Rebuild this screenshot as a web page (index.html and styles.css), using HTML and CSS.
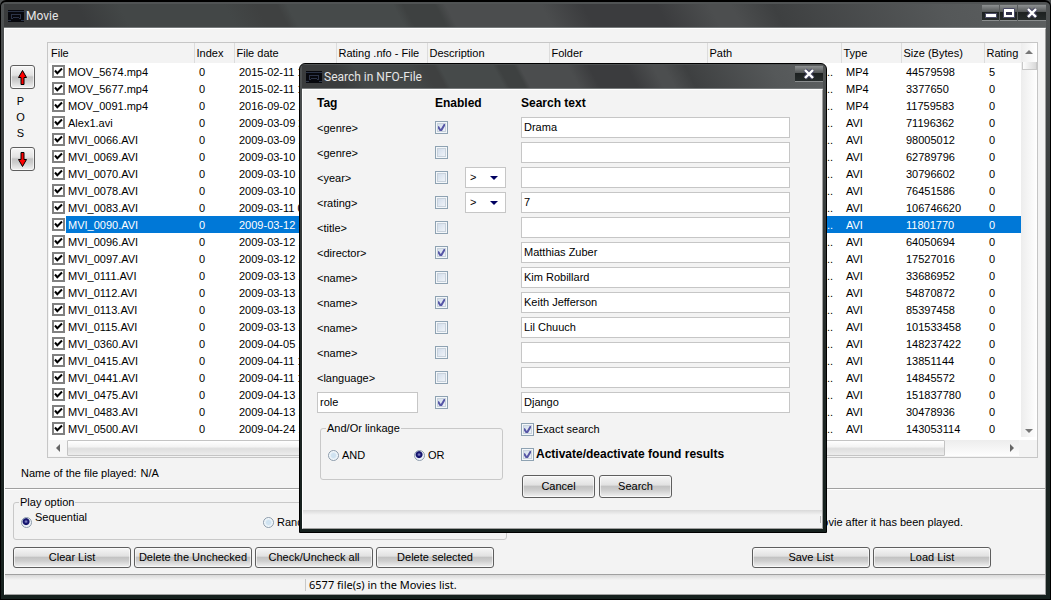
FILE: index.html
```html
<!DOCTYPE html>
<html lang="en">
<head>
<meta charset="utf-8">
<title>Movie</title>
<link rel="stylesheet" href="styles.css">
</head>
<body>
<div class="window main-window">
  <header class="titlebar">
    <svg class="app-icon" width="16" height="12" viewBox="0 0 16 12"><rect width="16" height="12" fill="#07080d"/><path d="M0 1.500h16M0 10.500h3M13 10.500h3" stroke="#2a3346"/><path d="M3 4.500h10M3.500 4v4M12.500 4v4M3 8.500h2M11 8.500h2M5 7.500h6" stroke="#2c3448" fill="none"/></svg>
    <h1 class="title">Movie</h1>
    <div class="caption-buttons">
      <button class="cap cap-narrow" aria-label="Minimize"><svg width="12" height="12" viewBox="0 0 12 12"><path d="M.5 6.500h11v4H.5z" fill="#fff" stroke="#4a4a66"/></svg></button>
      <button class="cap cap-narrow" aria-label="Maximize"><svg width="12" height="12" viewBox="0 0 12 12"><path d="M.5 1.500h11v9H.5z" fill="#fff" stroke="#4a4a66"/><path d="M3 5h6v3H3z" fill="#33334d"/></svg></button>
      <button class="cap" aria-label="Close"><svg width="12" height="12" viewBox="0 0 12 12"><path d="M2 2l8 8M10 2l-8 8" stroke="#4a4a66" stroke-width="4.500"/><path d="M2 2l8 8M10 2l-8 8" stroke="#fff" stroke-width="2.400"/></svg></button>
    </div>
  </header>
  <main class="client">
    <section class="work">
      <div class="pos">
        <button class="btn arrow-btn" aria-label="Move up"><svg width="11" height="17" viewBox="0 0 11 17"><path d="M5.500 1.500l4 7h-2.500v7H4v-7H1.500z" fill="#f00" stroke="#000"/></svg></button>
        <div class="pos-label"><span>P</span><span>O</span><span>S</span></div>
        <button class="btn arrow-btn" aria-label="Move down"><svg width="11" height="17" viewBox="0 0 11 17"><path d="M5.500 15.500l4-7h-2.500v-7H4v7H1.500z" fill="#f00" stroke="#000"/></svg></button>
      </div>
      <div class="list">
        <div class="list-body">
          <table class="files">
            <colgroup><col class="c-file"><col class="c-index"><col class="c-date"><col class="c-nfo"><col class="c-desc"><col class="c-folder"><col><col class="c-type"><col class="c-size"><col class="c-rating"></colgroup>
            <thead><tr><th>File</th><th>Index</th><th>File date</th><th>Rating .nfo - File</th><th>Description</th><th>Folder</th><th>Path</th><th>Type</th><th>Size (Bytes)</th><th>Rating</th></tr></thead>
            <tbody>
              <tr><td><label><input type="checkbox" class="tick" checked>MOV_5674.mp4</label></td><td>0</td><td>2015-02-11 1</td><td></td><td></td><td></td><td class="path">...</td><td>MP4</td><td>44579598</td><td>5</td></tr>
              <tr><td><label><input type="checkbox" class="tick" checked>MOV_5677.mp4</label></td><td>0</td><td>2015-02-11 1</td><td></td><td></td><td></td><td class="path">...</td><td>MP4</td><td>3377650</td><td>0</td></tr>
              <tr><td><label><input type="checkbox" class="tick" checked>MOV_0091.mp4</label></td><td>0</td><td>2016-09-02 1</td><td></td><td></td><td></td><td class="path">...</td><td>MP4</td><td>11759583</td><td>0</td></tr>
              <tr><td><label><input type="checkbox" class="tick" checked>Alex1.avi</label></td><td>0</td><td>2009-03-09 2</td><td></td><td></td><td></td><td class="path">...</td><td>AVI</td><td>71196362</td><td>0</td></tr>
              <tr><td><label><input type="checkbox" class="tick" checked>MVI_0066.AVI</label></td><td>0</td><td>2009-03-09 1</td><td></td><td></td><td></td><td class="path">...</td><td>AVI</td><td>98005012</td><td>0</td></tr>
              <tr><td><label><input type="checkbox" class="tick" checked>MVI_0069.AVI</label></td><td>0</td><td>2009-03-10 1</td><td></td><td></td><td></td><td class="path">...</td><td>AVI</td><td>62789796</td><td>0</td></tr>
              <tr><td><label><input type="checkbox" class="tick" checked>MVI_0070.AVI</label></td><td>0</td><td>2009-03-10 1</td><td></td><td></td><td></td><td class="path">...</td><td>AVI</td><td>30796602</td><td>0</td></tr>
              <tr><td><label><input type="checkbox" class="tick" checked>MVI_0078.AVI</label></td><td>0</td><td>2009-03-10 1</td><td></td><td></td><td></td><td class="path">...</td><td>AVI</td><td>76451586</td><td>0</td></tr>
              <tr><td><label><input type="checkbox" class="tick" checked>MVI_0083.AVI</label></td><td>0</td><td>2009-03-11 0</td><td></td><td></td><td></td><td class="path">...</td><td>AVI</td><td>106746620</td><td>0</td></tr>
              <tr class="selected"><td><label><input type="checkbox" class="tick" checked>MVI_0090.AVI</label></td><td>0</td><td>2009-03-12 1</td><td></td><td></td><td></td><td class="path">...</td><td>AVI</td><td>11801770</td><td>0</td></tr>
              <tr><td><label><input type="checkbox" class="tick" checked>MVI_0096.AVI</label></td><td>0</td><td>2009-03-12 1</td><td></td><td></td><td></td><td class="path">...</td><td>AVI</td><td>64050694</td><td>0</td></tr>
              <tr><td><label><input type="checkbox" class="tick" checked>MVI_0097.AVI</label></td><td>0</td><td>2009-03-12 1</td><td></td><td></td><td></td><td class="path">...</td><td>AVI</td><td>17527016</td><td>0</td></tr>
              <tr><td><label><input type="checkbox" class="tick" checked>MVI_0111.AVI</label></td><td>0</td><td>2009-03-13 1</td><td></td><td></td><td></td><td class="path">...</td><td>AVI</td><td>33686952</td><td>0</td></tr>
              <tr><td><label><input type="checkbox" class="tick" checked>MVI_0112.AVI</label></td><td>0</td><td>2009-03-13 1</td><td></td><td></td><td></td><td class="path">...</td><td>AVI</td><td>54870872</td><td>0</td></tr>
              <tr><td><label><input type="checkbox" class="tick" checked>MVI_0113.AVI</label></td><td>0</td><td>2009-03-13 1</td><td></td><td></td><td></td><td class="path">...</td><td>AVI</td><td>85397458</td><td>0</td></tr>
              <tr><td><label><input type="checkbox" class="tick" checked>MVI_0115.AVI</label></td><td>0</td><td>2009-03-13 1</td><td></td><td></td><td></td><td class="path">...</td><td>AVI</td><td>101533458</td><td>0</td></tr>
              <tr><td><label><input type="checkbox" class="tick" checked>MVI_0360.AVI</label></td><td>0</td><td>2009-04-05 1</td><td></td><td></td><td></td><td class="path">...</td><td>AVI</td><td>148237422</td><td>0</td></tr>
              <tr><td><label><input type="checkbox" class="tick" checked>MVI_0415.AVI</label></td><td>0</td><td>2009-04-11 1</td><td></td><td></td><td></td><td class="path">...</td><td>AVI</td><td>13851144</td><td>0</td></tr>
              <tr><td><label><input type="checkbox" class="tick" checked>MVI_0441.AVI</label></td><td>0</td><td>2009-04-11 1</td><td></td><td></td><td></td><td class="path">...</td><td>AVI</td><td>14845572</td><td>0</td></tr>
              <tr><td><label><input type="checkbox" class="tick" checked>MVI_0475.AVI</label></td><td>0</td><td>2009-04-13 1</td><td></td><td></td><td></td><td class="path">...</td><td>AVI</td><td>151837780</td><td>0</td></tr>
              <tr><td><label><input type="checkbox" class="tick" checked>MVI_0483.AVI</label></td><td>0</td><td>2009-04-13 1</td><td></td><td></td><td></td><td class="path">...</td><td>AVI</td><td>30478936</td><td>0</td></tr>
              <tr><td><label><input type="checkbox" class="tick" checked>MVI_0500.AVI</label></td><td>0</td><td>2009-04-24 1</td><td></td><td></td><td></td><td class="path">...</td><td>AVI</td><td>143053114</td><td>0</td></tr>
            </tbody>
          </table>
          <div class="vscroll"><div class="tri up"></div><div class="vthumb"></div><div class="tri down"></div></div>
        </div>
        <div class="hscroll"><div class="hcell"><div class="tri left"></div></div><div class="hthumb"></div><div class="hrest"><div class="tri right"></div></div></div>
      </div>
    </section>
    <p class="playing"><span>Name of the file played:</span><span>N/A</span></p>
    <section class="options">
      <fieldset class="group play-group">
        <legend>Play option</legend>
        <label class="radio-label sequential"><input type="radio" name="play" class="radio" checked><span>Sequential</span></label>
        <label class="radio-label"><input type="radio" name="play" class="radio"><span>Random</span></label>
      </fieldset>
      <label class="delete-option"><input type="checkbox" class="check"><span>Delete movie after it has been played.</span></label>
    </section>
    <div class="actions">
      <button class="btn">Clear List</button>
      <button class="btn">Delete the Unchecked</button>
      <button class="btn">Check/Uncheck all</button>
      <button class="btn">Delete selected</button>
      <span class="spacer"></span>
      <button class="btn">Save List</button>
      <button class="btn">Load List</button>
    </div>
    <footer class="status main-status"><span class="status-text">6577 file(s) in the Movies list.</span></footer>
  </main>
</div>

<div class="window dialog" role="dialog" aria-labelledby="dialog-title">
  <header class="titlebar">
    <svg class="app-icon" width="16" height="12" viewBox="0 0 16 12"><rect width="16" height="12" fill="#07080d"/><path d="M0 1.500h16M0 10.500h3M13 10.500h3" stroke="#2a3346"/><path d="M3 4.500h10M3.500 4v4M12.500 4v4M3 8.500h2M11 8.500h2M5 7.500h6" stroke="#2c3448" fill="none"/></svg>
    <h2 class="title" id="dialog-title">Search in NFO-File</h2>
    <div class="caption-buttons">
      <button class="cap" aria-label="Close"><svg width="12" height="12" viewBox="0 0 12 12"><path d="M2 2l8 8M10 2l-8 8" stroke="#4a4a66" stroke-width="4.500"/><path d="M2 2l8 8M10 2l-8 8" stroke="#fff" stroke-width="2.400"/></svg></button>
    </div>
  </header>
  <form class="client">
    <div class="criteria">
      <div class="crit head"><span>Tag</span><span>Enabled</span><span></span><span>Search text</span></div>
      <div class="crit"><label for="t1">&lt;genre&gt;</label><input type="checkbox" class="check" aria-label="Enable genre" checked><span></span><input type="text" class="field" id="t1" value="Drama"></div>
      <div class="crit"><label for="t2">&lt;genre&gt;</label><input type="checkbox" class="check" aria-label="Enable second genre"><span></span><input type="text" class="field" id="t2"></div>
      <div class="crit"><label for="t3">&lt;year&gt;</label><input type="checkbox" class="check" aria-label="Enable year"><select class="compare" aria-label="Year comparison"><option>&gt;</option><option>=</option><option>&lt;</option></select><input type="text" class="field" id="t3"></div>
      <div class="crit"><label for="t4">&lt;rating&gt;</label><input type="checkbox" class="check" aria-label="Enable rating"><select class="compare" aria-label="Rating comparison"><option>&gt;</option><option>=</option><option>&lt;</option></select><input type="text" class="field" id="t4" value="7"></div>
      <div class="crit"><label for="t5">&lt;title&gt;</label><input type="checkbox" class="check" aria-label="Enable title"><span></span><input type="text" class="field" id="t5"></div>
      <div class="crit"><label for="t6">&lt;director&gt;</label><input type="checkbox" class="check" aria-label="Enable director" checked><span></span><input type="text" class="field" id="t6" value="Matthias Zuber"></div>
      <div class="crit"><label for="t7">&lt;name&gt;</label><input type="checkbox" class="check" aria-label="Enable first name"><span></span><input type="text" class="field" id="t7" value="Kim Robillard"></div>
      <div class="crit"><label for="t8">&lt;name&gt;</label><input type="checkbox" class="check" aria-label="Enable second name" checked><span></span><input type="text" class="field" id="t8" value="Keith Jefferson"></div>
      <div class="crit"><label for="t9">&lt;name&gt;</label><input type="checkbox" class="check" aria-label="Enable third name"><span></span><input type="text" class="field" id="t9" value="Lil Chuuch"></div>
      <div class="crit"><label for="t10">&lt;name&gt;</label><input type="checkbox" class="check" aria-label="Enable fourth name"><span></span><input type="text" class="field" id="t10"></div>
      <div class="crit"><label for="t11">&lt;language&gt;</label><input type="checkbox" class="check" aria-label="Enable language"><span></span><input type="text" class="field" id="t11"></div>
      <div class="crit"><input type="text" class="field tag-field" aria-label="Custom tag" value="role"><input type="checkbox" class="check" aria-label="Enable custom tag" checked><span></span><input type="text" class="field" aria-label="Custom tag text" value="Django"></div>
    </div>
    <div class="lower">
      <fieldset class="group link-group">
        <legend>And/Or linkage</legend>
        <label class="radio-label"><input type="radio" name="link" class="radio"><span>AND</span></label>
        <label class="radio-label"><input type="radio" name="link" class="radio" checked><span>OR</span></label>
      </fieldset>
      <div class="search-options">
        <label class="check-label"><input type="checkbox" class="check" checked><span>Exact search</span></label>
        <label class="check-label strong"><input type="checkbox" class="check" checked><span>Activate/deactivate found results</span></label>
        <div class="dialog-buttons">
          <button type="button" class="btn">Cancel</button>
          <button type="button" class="btn">Search</button>
        </div>
      </div>
    </div>
    <div class="status dialog-status"></div>
  </form>
</div>
</body>
</html>
```
FILE: styles.css
```css
* { box-sizing: border-box; }
body {
  margin: 0;
  position: relative;
  min-height: 100vh;
  display: flex;
  background: #4c4f50;
  font: 11px/16px "Liberation Sans", Arial, sans-serif;
  color: #000;
}
button, input, select { font: inherit; color: inherit; margin: 0; }
h1, h2, p { margin: 0; font-weight: normal; }

/* Window frame */
.window {
  display: flex;
  flex-direction: column;
  border: 1px solid #000;
  border-radius: 6px 6px 0 0;
  background: linear-gradient(#505354, #222827 60%, #16211e);
}
.main-window { flex: 1; padding: 2px 4px 4px 3px; border-top-width: 2px; }
.titlebar {
  display: flex;
  align-items: center;
  height: 24px;
  padding-left: 4px;
  color: #e6e6e6;
  border-bottom: 1px solid #777b7c;
  background: linear-gradient(62deg, #3a3c3d 0 8%, #434747 12% 22%, #3f4141 25% 27%, #464a4a 28% 38%, #3e4141 39% 42%, #4b4d4e 43% 52%, #3b3c3e 56% 63%, #4c4e4f 68% 70%, #3e4041 74%, #555859 90%, #5c5f60);
}
.title { flex: 1; font: 12px/16px Roboto, "Noto Sans", sans-serif; margin-left: 2px; }
.caption-buttons { display: flex; align-self: flex-start; gap: 1px; padding-top: 1px; }
.cap {
  width: 28px;
  height: 16px;
  padding: 0;
  border: 0;
  border-bottom: 1px solid #8a8d8e;
  display: flex;
  align-items: center;
  justify-content: center;
  background: linear-gradient(#8d9091, #555859 45%, #1d2121 50%, #262b2b);
}
.cap-narrow { width: 17px; }
.client {
  flex: 1;
  display: flex;
  flex-direction: column;
  background: #f3f3f3;
  border: 1px solid #fff;
  border-right-color: #a0a0a0;
  border-bottom-color: #a0a0a0;
}

/* Movie list */
.work { display: flex; padding: 13px 7px 0 5px; gap: 12px; }
.pos { display: flex; flex-direction: column; align-items: center; width: 25px; padding-top: 23px; }
.pos-label { display: flex; flex-direction: column; align-items: center; padding: 4px 4px 6px 0; }
.btn {
  height: 21px;
  padding: 0 0 2px;
  border: 1px solid #5e5e5e;
  border-radius: 3px;
  line-height: 16px;
  box-shadow: inset 0 0 0 1px rgba(255, 255, 255, .6);
  background: linear-gradient(#f6f6f6 0, #e2e2e2 42%, #c3c3c3 50%, #cecece 68%, #f2f2f2);
}
.arrow-btn { width: 25px; height: 24px; padding: 0; display: flex; align-items: center; justify-content: center; }
.list { flex: 1; min-width: 0; border: 1px solid #c6c6c6; padding-left: 1px; background: #f3f3f3; }
.list-body { display: flex; background: #fff; }
.files { flex: 1; width: 100%; table-layout: fixed; border-collapse: collapse; }
.c-file { width: 145px; }
.c-index { width: 40px; }
.c-date { width: 102px; }
.c-nfo { width: 91px; }
.c-desc { width: 122px; }
.c-folder { width: 158px; }
.c-type { width: 60px; }
.c-size { width: 83px; }
.c-rating { width: 37px; }
.files th {
  height: 20px;
  padding: 0 0 0 2px;
  text-align: left;
  font-weight: normal;
  white-space: nowrap;
  background: #f3f3f3;
  border-right: 1px solid #dcdcdc;
}
.files th:last-child { border-right: 0; }
.files td { height: 17px; padding: 0 0 0 5px; line-height: 16px; white-space: nowrap; overflow: hidden; }
.files td:first-child { padding-left: 3px; }
.files .path { text-align: right; padding-right: 8px; }
.files label { display: flex; align-items: center; gap: 3px; height: 17px; }
.selected { color: #fff; }
.selected td { background: #0078d7; }
.selected td:first-child { background: linear-gradient(90deg, #fff 17px, #0078d7 17px); }
.tick {
  appearance: none;
  width: 13px;
  height: 13px;
  border: 2px solid #808080;
  background: #fff;
}
.tick:checked {
  background: #fff url("data:image/svg+xml,%3Csvg xmlns='http://www.w3.org/2000/svg' viewBox='0 0 9 9'%3E%3Cpath d='M1 3.500L3.300 6.200L8 1.500' fill='none' stroke='%23000' stroke-width='2'/%3E%3C/svg%3E") center / 9px 9px no-repeat;
}
.vscroll {
  width: 16px;
  display: flex;
  flex-direction: column;
  align-items: center;
  padding: 7px 0 4px;
  background: linear-gradient(90deg, #ededed, #fff);
}
.vthumb { width: 15px; height: 8px; margin: 8px 0 auto; border: 1px solid #c8c8c8; border-top: 0; background: linear-gradient(90deg, #fdfdfd, #d9d9d9); }
.tri { width: 0; height: 0; border: 4px solid transparent; }
.up { border-top-width: 0; border-bottom-color: #777; }
.down { border-bottom-width: 0; border-top-color: #777; }
.left { border-left-width: 0; border-right-color: #666; }
.right { border-right-width: 0; border-left-color: #666; }
.hscroll { display: flex; height: 20px; padding: 3px 18px 1px 0; background: linear-gradient(#fff 3px, #f3f3f3 3px); }
.hcell { width: 18px; display: flex; align-items: center; justify-content: center; background: #f6f6f6; }
.hthumb { flex: 1; border: 1px solid #c4c4c4; border-radius: 1px; background: linear-gradient(#fff, #f4f4f4 40%, #dedede 55%, #ececec); }
.hrest { width: 74px; display: flex; align-items: center; justify-content: flex-end; padding-right: 5px; background: linear-gradient(#ededed, #fdfdfd); }

.playing { display: flex; gap: 4px; padding: 7px 16px 7px; border-bottom: 1px solid #a0a0a0; }

/* Playback options */
.options { display: flex; justify-content: space-between; align-items: center; padding: 4px 82px 0 8px; border-top: 1px solid #fff; }
.group { margin: 0; min-width: 0; border: 1px solid #c8c8c8; border-radius: 3px; }
.group legend { padding: 0 1px; }
.play-group { display: grid; grid-template-columns: 242px 1fr; width: 494px; height: 46px; padding: 0 7px; }
.play-group legend { margin-left: -2px; }
.radio-label { display: flex; align-items: center; gap: 3px; }
.sequential span { padding-bottom: 11px; }
.play-group .radio-label { height: 24px; }
.radio {
  appearance: none;
  width: 11px;
  height: 11px;
  border: 1px solid #8c9cac;
  border-radius: 50%;
  background: radial-gradient(circle, #cfe2f0 0 2px, #f4f9fc 4px);
}
.radio:checked { background: radial-gradient(circle at 45% 40%, #9a9ad8 0, #14146e 2px, #14146e 3px, #eef2f8 4px); }
.check {
  appearance: none;
  width: 13px;
  height: 13px;
  border: 1px solid #8ea2b2;
  box-shadow: inset 0 0 0 1px #f4f7fa, inset 0 0 0 2px #c8d2dc;
  background: linear-gradient(135deg, #cbd8e8, #f6f8fb);
}
.check:checked {
  background: url("data:image/svg+xml,%3Csvg xmlns='http://www.w3.org/2000/svg' viewBox='0 0 11 11'%3E%3Cpath d='M2 4.500L4.800 9L9.500 1' fill='none' stroke='%235656a6' stroke-width='2'/%3E%3C/svg%3E") center / 11px 11px no-repeat, linear-gradient(135deg, #cbd8e8, #f6f8fb);
}
.delete-option { display: flex; align-items: center; gap: 3px; padding-top: 10px; }
.actions { display: flex; gap: 3px; padding: 7px 54px 6px 8px; }
.actions .btn { width: 118px; }
.spacer { flex: 1; }
.status {
  display: flex;
  align-items: center;
  background: linear-gradient(#d9d9d9, #f3f3f3 5px);
}
.main-status { flex: 1; border-top: 1px solid #a0a0a0; font: 11px/16px "Noto Sans", sans-serif; }
.status-text { margin-left: 300px; padding-left: 3px; border-left: 1px solid #c8c8c8; line-height: 12px; }

/* Search dialog */
.dialog {
  position: absolute;
  left: 299px;
  top: 63px;
  width: 528px;
  padding: 1px 3px 3px 2px;
}
.criteria { display: flex; flex-direction: column; gap: 4px; padding: 2px 32px 0 14px; }
.crit {
  display: grid;
  grid-template-columns: 118px 30px 56px 1fr;
  align-items: center;
  height: 21px;
}
.head { font-weight: bold; font-size: 12px; white-space: nowrap; }
.field { width: 100%; height: 21px; padding: 0 2px 2px; border: 1px solid #c6c6c6; background: #fff; }
.tag-field { width: 101px; }
.compare {
  appearance: none;
  width: 41px;
  height: 21px;
  padding: 0 4px 2px;
  border: 1px solid #c6c6c6;
  border-radius: 0;
  background: #fff url("data:image/svg+xml,%3Csvg xmlns='http://www.w3.org/2000/svg' viewBox='0 0 8 4'%3E%3Cpath d='M0 0h8L4 4z' fill='%23000060'/%3E%3C/svg%3E") right 7px center / 8px 4px no-repeat;
}
.lower { display: flex; gap: 18px; padding: 7px 32px 12px 17px; }
.link-group { display: grid; grid-template-columns: 86px 1fr; align-items: center; width: 183px; height: 60px; padding: 0 7px 5px; }
.link-group legend { margin-left: -2px; }
.search-options { flex: 1; display: flex; flex-direction: column; gap: 9px; padding-top: 1px; }
.check-label { display: flex; align-items: center; gap: 2px; }
.strong { font-size: 12px; font-weight: bold; }
.dialog-buttons { display: flex; gap: 4px; padding: 4px 1px 0; }
.dialog-buttons .btn { width: 73px; height: 23px; }
.dialog-status { height: 18px; }
.dialog-status::after { content: ""; height: 7px; margin-left: auto; margin-right: 1px; border-right: 1px solid #b8b8b8; }
```
